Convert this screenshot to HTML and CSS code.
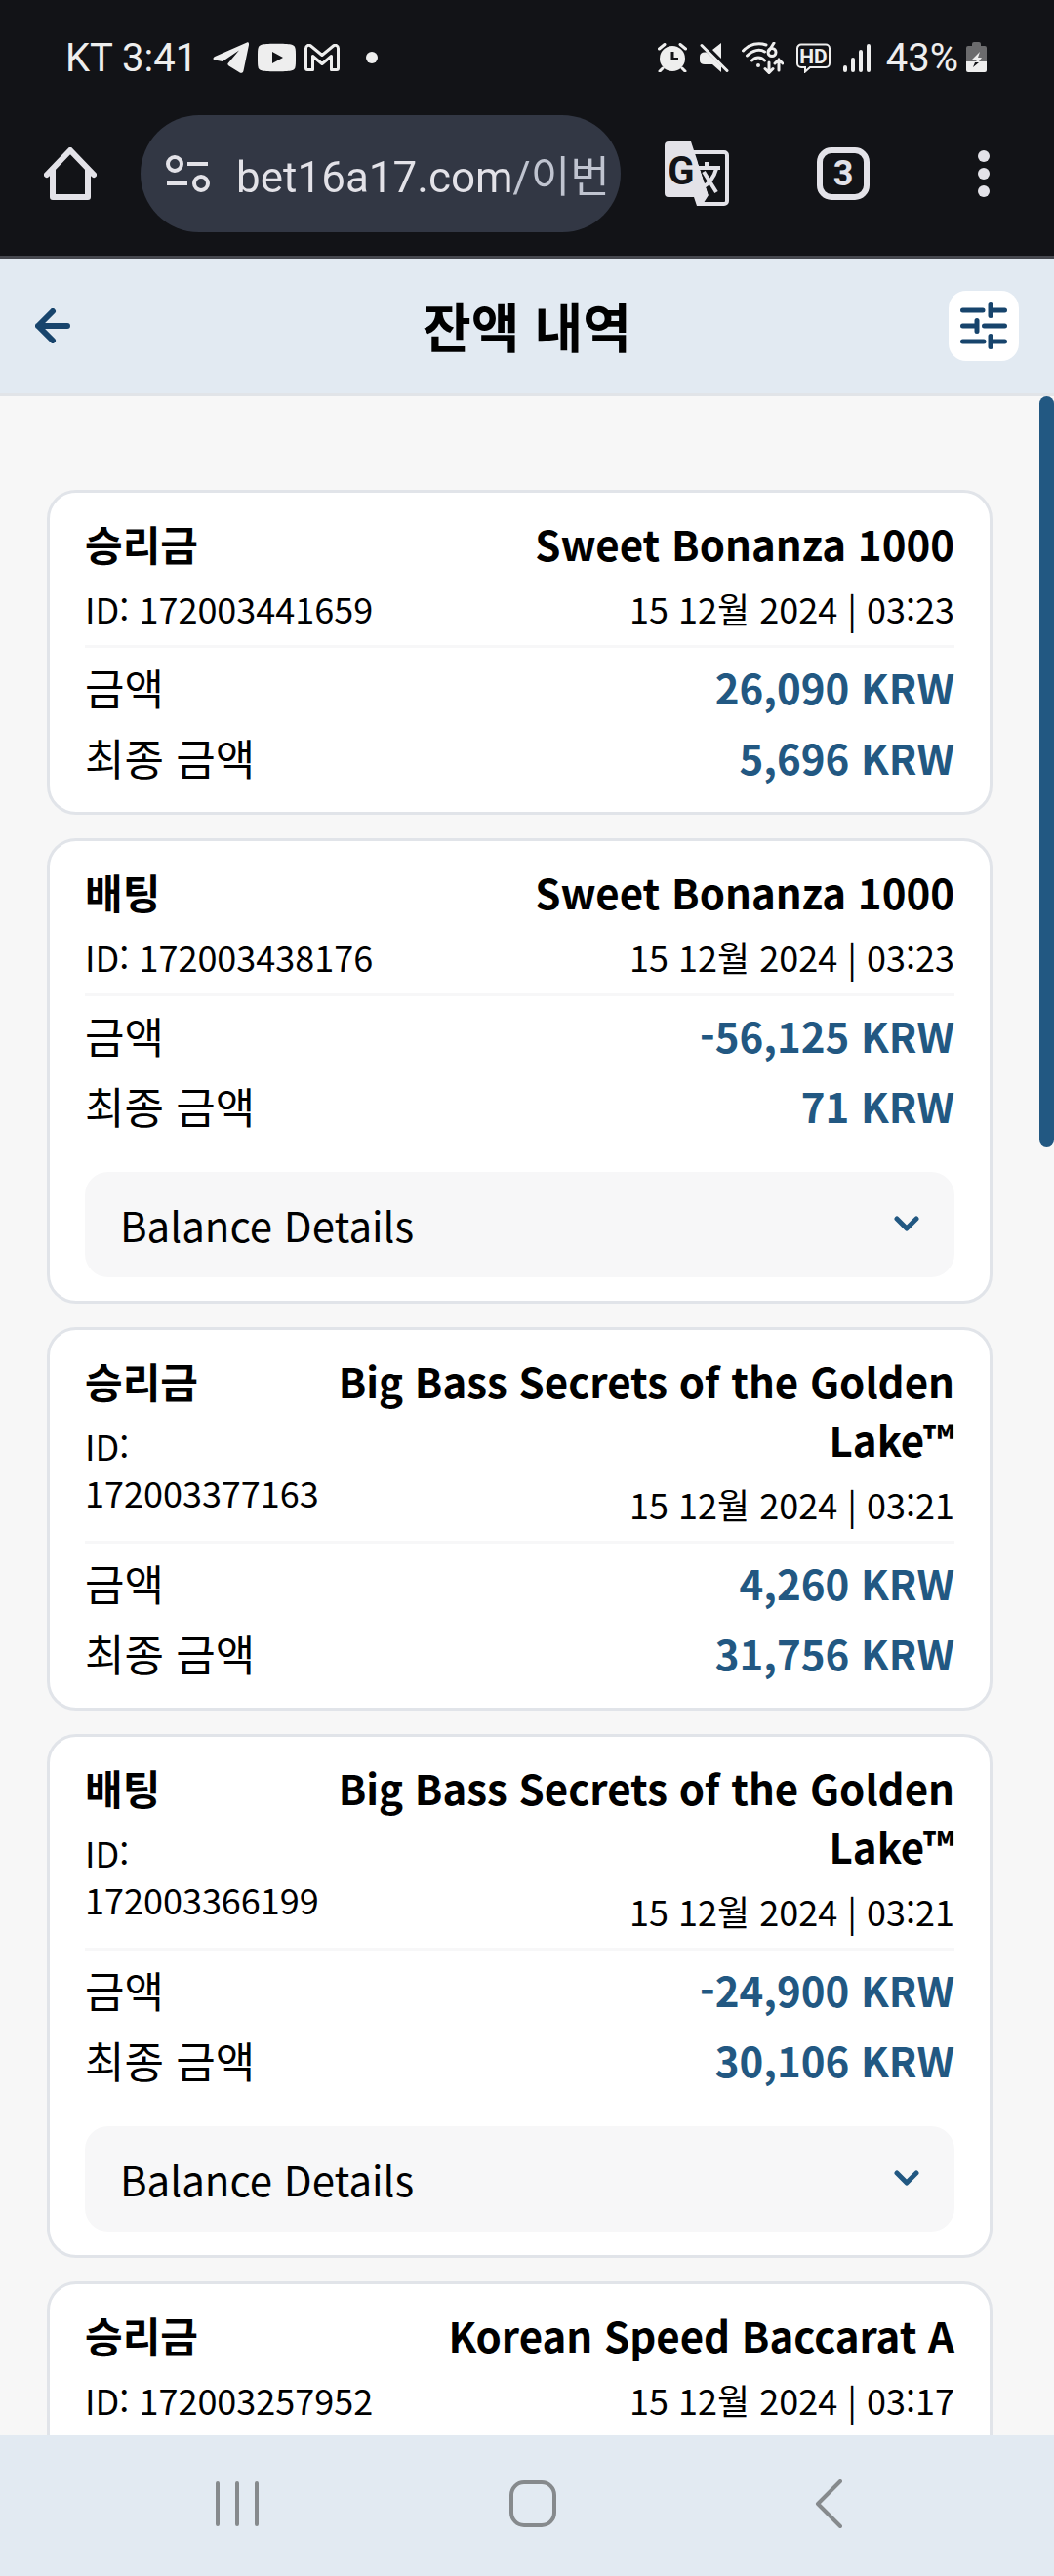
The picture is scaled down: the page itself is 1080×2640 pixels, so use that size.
FILE: index.html
```
<!DOCTYPE html>
<html lang="ko">

<head>
    <meta charset="UTF-8">
    <meta name="viewport" content="width=device-width, initial-scale=1.0">
    <title>잔액 내역</title>
    <link rel="stylesheet" href="styles.css">
</head>

<body>
    <!-- Phone status bar -->
    <div class="status-bar">
        <div class="status-group">
            <span class="status-text">KT 3:41</span>
            <span class="status-icons status-icons-left">
                <svg width="37" height="32" viewBox="0 0 37 32" fill="#eee">
                    <path d="M35 0.500L2 15c-2 1-2 3 0 3.500L10 20 27 8.500 16 21.500c-1 1-1 2 .5 3L27 31c2 1.500 4 1 4.500-1.500L37 3c.3-2-.7-3-2-2.500z" />
                </svg>
                <svg width="39" height="30" viewBox="0 0 39 30">
                    <path fill="#eee" d="M5 1.500C10 .5 29 .5 34 1.500S39 5 39 15s0 12.500-5 13.500-24 1-29 0S0 25 0 15 0 2.500 5 1.500z" />
                    <path fill="#121317" d="M15 9v12l11-6z" />
                </svg>
                <svg width="36" height="28" viewBox="0 0 36 28" fill="none" stroke="#eee" stroke-width="3" stroke-linejoin="round">
                    <path d="M1.500 4.500c0-3 3-4 5-2.500L18 11.500 29.500 2c2-1.500 5-.5 5 2.500V25c0 1-.5 1.500-1.500 1.500h-5.500v-14L18 20.500l-9.500-8v14H3c-1 0-1.500-.5-1.500-1.500z" />
                </svg>
            </span>
            <span class="status-dot"></span>
        </div>
        <div class="status-group">
            <span class="status-icons status-icons-right">
                <!-- alarm -->
                <svg width="30" height="30" viewBox="0 0 30 30">
                    <circle cx="15" cy="16" r="13" fill="#eee" />
                    <path d="M1.500 6L7 1.500M28.500 6L23 1.500M5 26l-3 3M25 26l3 3" stroke="#eee" stroke-width="3" stroke-linecap="round" />
                    <path d="M15 9v7.500h6" stroke="#121317" stroke-width="3" fill="none" />
                </svg>
                <!-- muted -->
                <svg width="30" height="30" viewBox="0 0 30 30">
                    <path fill="#eee" d="M22 0v16L13 7zM5 9.500h2L22 24v6l-9-8H5c-3 0-5-1.500-5-4v-4c0-3 2-4.500 5-4.500z" />
                    <path d="M2 2.500l26 26" stroke="#eee" stroke-width="3" stroke-linecap="round" />
                </svg>
                <!-- wifi -->
                <svg width="43" height="33" viewBox="0 0 43 33" fill="none" stroke="#eee" stroke-width="3" stroke-linecap="round">
                    <path d="M1.500 9C8 2 17 0 25 3M5.500 14c6-6 13-7 18-4M10.500 19c4-4 9-4 13 0" />
                    <circle cx="17" cy="24" r="2" fill="#eee" stroke="none" />
                    <path d="M33 1l-5 8" />
                    <circle cx="31" cy="10.500" r="4" />
                    <path d="M28 21v10M24 27.500l4 4 4-4M38 29V18M34 22l4-4 4 4" />
                </svg>
                <!-- HD voice -->
                <svg width="35" height="31" viewBox="0 0 35 31">
                    <path d="M5 1.500h25a4 4 0 0 1 4 4V21a4 4 0 0 1-4 4H14l-5 4.500V25H5a4 4 0 0 1-4-4V5.500a4 4 0 0 1 4-4z" fill="none" stroke="#eee" stroke-width="2" />
                    <text x="17.500" y="20.500" text-anchor="middle" class="hd-label">HD</text>
                </svg>
                <!-- signal -->
                <svg width="28" height="31" viewBox="0 0 28 31" stroke="#eee" stroke-width="4" stroke-linecap="round">
                    <path d="M2 25v3M10 17v11M18 9v19M26 3v25" />
                </svg>
            </span>
            <span class="status-text">43%</span>
            <!-- battery -->
            <svg class="battery" width="21" height="32" viewBox="0 0 21 32">
                <path fill="#6b6b6d" d="M6 2a2 2 0 0 1 2-2h5a2 2 0 0 1 2 2v2h4a2 2 0 0 1 2 2v14H0V6a2 2 0 0 1 2-2h4z" />
                <path fill="#eee" d="M0 20h21v9a2 2 0 0 1-2 2H2a2 2 0 0 1-2-2z" />
                <path fill="#eee" d="M14 10L5 19h6l-1 1h3l3-4h-4z" />
                <path fill="#121317" d="M7 26l6-5h-4z" />
            </svg>
        </div>
    </div>

    <!-- Browser toolbar -->
    <div class="toolbar">
        <button class="tool" aria-label="Home">
            <svg width="54" height="54" viewBox="0 0 54 54" fill="none" stroke="#e3e2e8" stroke-width="6" stroke-linecap="round" stroke-linejoin="round">
                <path d="M3 28L27 3l24 25" />
                <path d="M9 23v28h36V23" />
            </svg>
        </button>
        <div class="address">
            <button class="tool site-info" aria-label="Site settings">
                <svg width="45" height="39" viewBox="0 0 45 39" fill="none" stroke="#e3e2e8" stroke-width="4">
                    <circle cx="9" cy="9" r="7" />
                    <path d="M22 9h21M1 29h21" />
                    <circle cx="36" cy="29" r="7" />
                </svg>
            </button>
            <input class="url" type="text" value="bet16a17.com/이번" aria-label="Address">
        </div>
        <button class="tool" aria-label="Translate">
            <svg width="66" height="66" viewBox="0 0 66 66">
                <path d="M29 11h32a3 3 0 0 1 3 3v47a3 3 0 0 1-3 3H36" fill="none" stroke="#e3e2e8" stroke-width="4" />
                <path fill="#e3e2e8" d="M4 0h23l18 55-7 11h-5l-3-9H4a4 4 0 0 1-4-4V4a4 4 0 0 1 4-4z" />
                <path fill="#121317" d="M34 21l11 34 6-9-8-25z" />
                <path d="M34 27h23M43 21v6M53 28c-2 8-8 16-14 19M40 31l13 21" fill="none" stroke="#e3e2e8" stroke-width="4" />
                <text x="17" y="44" text-anchor="middle" class="g-label">G</text>
            </svg>
        </button>
        <button class="tool tabs" aria-label="3 open tabs">3</button>
        <button class="tool" aria-label="Menu">
            <svg width="54" height="54" viewBox="0 0 54 54" fill="#e3e2e8">
                <circle cx="27" cy="9" r="6" />
                <circle cx="27" cy="27" r="6" />
                <circle cx="27" cy="45" r="6" />
            </svg>
        </button>
    </div>

    <header class="page-header">
        <button class="back" aria-label="Back">
            <svg width="36" height="36" viewBox="0 0 36 36" fill="none" stroke="#17446c" stroke-width="6" stroke-linecap="round" stroke-linejoin="round">
                <path d="M33 18H3M18 3L3 18l15 15" />
            </svg>
        </button>
        <h1>잔액 내역</h1>
        <button class="filter" aria-label="Filter">
            <svg width="48" height="48" viewBox="0 0 48 48" fill="none" stroke="#17446c" stroke-width="5" stroke-linecap="round">
                <path d="M2.500 8H23M31 2.500v11M31 8h14.500" />
                <path d="M2.500 24H17M17 18.500v11M24.500 24h21" />
                <path d="M2.500 40H24M31 34.500v11M31 40h14.500" />
            </svg>
        </button>
    </header>

    <main class="content">
        <div class="list">
            <article class="card">
                <div class="card-head">
                    <div class="card-left">
                        <h2>승리금</h2>
                        <p>ID: 172003441659</p>
                    </div>
                    <div class="card-right">
                        <h3>Sweet Bonanza 1000</h3>
                        <p>15 12월 2024 | 03:23</p>
                    </div>
                </div>
                <dl class="amounts">
                    <div class="row">
                        <dt>금액</dt>
                        <dd>26,090 KRW</dd>
                    </div>
                    <div class="row">
                        <dt>최종 금액</dt>
                        <dd>5,696 KRW</dd>
                    </div>
                </dl>
            </article>

            <article class="card">
                <div class="card-head">
                    <div class="card-left">
                        <h2>배팅</h2>
                        <p>ID: 172003438176</p>
                    </div>
                    <div class="card-right">
                        <h3>Sweet Bonanza 1000</h3>
                        <p>15 12월 2024 | 03:23</p>
                    </div>
                </div>
                <dl class="amounts">
                    <div class="row">
                        <dt>금액</dt>
                        <dd>-56,125 KRW</dd>
                    </div>
                    <div class="row">
                        <dt>최종 금액</dt>
                        <dd>71 KRW</dd>
                    </div>
                </dl>
                <button class="details" aria-expanded="false">
                    Balance Details
                    <svg width="26" height="16" viewBox="0 0 26 16" fill="none" stroke="#225882" stroke-width="5" stroke-linecap="round" stroke-linejoin="round">
                        <path d="M3 3l10 10L23 3" />
                    </svg>
                </button>
            </article>

            <article class="card">
                <div class="card-head">
                    <div class="card-left">
                        <h2>승리금</h2>
                        <p>ID: 172003377163</p>
                    </div>
                    <div class="card-right">
                        <h3>Big Bass Secrets of the Golden Lake™</h3>
                        <p>15 12월 2024 | 03:21</p>
                    </div>
                </div>
                <dl class="amounts">
                    <div class="row">
                        <dt>금액</dt>
                        <dd>4,260 KRW</dd>
                    </div>
                    <div class="row">
                        <dt>최종 금액</dt>
                        <dd>31,756 KRW</dd>
                    </div>
                </dl>
            </article>

            <article class="card">
                <div class="card-head">
                    <div class="card-left">
                        <h2>배팅</h2>
                        <p>ID: 172003366199</p>
                    </div>
                    <div class="card-right">
                        <h3>Big Bass Secrets of the Golden Lake™</h3>
                        <p>15 12월 2024 | 03:21</p>
                    </div>
                </div>
                <dl class="amounts">
                    <div class="row">
                        <dt>금액</dt>
                        <dd>-24,900 KRW</dd>
                    </div>
                    <div class="row">
                        <dt>최종 금액</dt>
                        <dd>30,106 KRW</dd>
                    </div>
                </dl>
                <button class="details" aria-expanded="false">
                    Balance Details
                    <svg width="26" height="16" viewBox="0 0 26 16" fill="none" stroke="#225882" stroke-width="5" stroke-linecap="round" stroke-linejoin="round">
                        <path d="M3 3l10 10L23 3" />
                    </svg>
                </button>
            </article>

            <article class="card">
                <div class="card-head">
                    <div class="card-left">
                        <h2>승리금</h2>
                        <p>ID: 172003257952</p>
                    </div>
                    <div class="card-right">
                        <h3>Korean Speed Baccarat A</h3>
                        <p>15 12월 2024 | 03:17</p>
                    </div>
                </div>
            </article>
        </div>
        <div class="scroll-track">
            <div class="scroll-thumb" style="height: 36.8%"></div>
        </div>
    </main>

    <!-- System navigation -->
    <nav class="system-nav">
        <button aria-label="Recent apps">
            <svg width="44" height="48" viewBox="0 0 44 48" stroke="#868a8d" stroke-width="4" stroke-linecap="round">
                <path d="M2 3v42M22 3v42M42 3v42" />
            </svg>
        </button>
        <button aria-label="Home screen">
            <svg width="48" height="48" viewBox="0 0 48 48" fill="none" stroke="#868a8d" stroke-width="4">
                <rect x="2" y="2" width="44" height="44" rx="13" />
            </svg>
        </button>
        <button aria-label="Go back">
            <svg width="28" height="50" viewBox="0 0 28 50" fill="none" stroke="#868a8d" stroke-width="4" stroke-linecap="round" stroke-linejoin="round">
                <path d="M26 2L3 25l23 23" />
            </svg>
        </button>
    </nav>
</body>

</html>
```
FILE: styles.css
```
* {
    box-sizing: border-box;
}

body {
    margin: 0;
    height: 100vh;
    display: flex;
    flex-direction: column;
    overflow: hidden;
    background: #f7f7f7;
    color: #000;
    font-family: "Noto Sans CJK KR", "Noto Sans", sans-serif;
}

h1, h2, h3, p, dl, dd {
    margin: 0;
}

button {
    padding: 0;
    border: none;
    background: none;
    font: inherit;
    color: inherit;
    cursor: pointer;
}

svg {
    display: block;
    flex: none;
}

/* Status bar */
.status-bar {
    flex: none;
    height: 118px;
    padding: 0 69px 0 67px;
    display: flex;
    align-items: center;
    justify-content: space-between;
    background: #121317;
    color: #eee;
    font-family: Roboto, sans-serif;
    font-size: 40px;
}

.status-group,
.status-icons {
    display: flex;
    align-items: center;
}

.status-icons-left {
    gap: 9px;
    margin-left: 16px;
}

.status-icons-right {
    gap: 13px;
    margin-right: 16px;
}

.status-dot {
    width: 12px;
    height: 12px;
    margin-left: 27px;
    border-radius: 50%;
    background: #eee;
}

.battery {
    margin-left: 8px;
}

.hd-label {
    fill: #eee;
    font-size: 21px;
    font-weight: 700;
}

/* Browser toolbar */
.toolbar {
    flex: none;
    padding: 0 45px 24px;
    display: flex;
    align-items: center;
    gap: 90px;
    background: #121317;
    border-bottom: 3px solid #46484f;
    font-family: Roboto, "Noto Sans CJK KR", sans-serif;
}

.tool {
    flex: none;
}

.address {
    flex: 1;
    min-width: 0;
    height: 120px;
    margin: 0 -45px;
    padding: 0 6px 0 26px;
    display: flex;
    align-items: center;
    gap: 27px;
    border-radius: 60px;
    background: #323744;
}

.url {
    flex: 1;
    min-width: 0;
    height: 72px;
    padding: 0;
    border: none;
    outline: none;
    /* host is brighter than the path */
    background: linear-gradient(to right, #e3e2e8 285px, #c0c4d0 285px);
    background-clip: text;
    -webkit-background-clip: text;
    color: transparent;
    font: inherit;
    font-size: 44px;
}

.g-label {
    fill: #121317;
    font-size: 40px;
    font-weight: 700;
}

.tabs {
    width: 54px;
    height: 54px;
    border: 6px solid #e3e2e8;
    border-radius: 15px;
    color: #e3e2e8;
    font-size: 36px;
    font-weight: 700;
    line-height: 42px;
}

/* Page header */
.page-header {
    flex: none;
    height: 141px;
    padding: 0 36px;
    display: flex;
    align-items: center;
    justify-content: space-between;
    background: #e2eaf2;
    border-bottom: 3px solid #e1e4e8;
}

.page-header h1 {
    font-size: 54px;
    font-weight: 700;
    line-height: 72px;
}

.back,
.filter {
    width: 72px;
    height: 72px;
    display: flex;
    align-items: center;
}

.filter {
    justify-content: center;
    border-radius: 18px;
    background: #fff;
}

/* List */
.content {
    flex: 1;
    min-height: 0;
    display: flex;
}

.list {
    flex: 1;
    min-width: 0;
    padding: 96px 48px 0;
    display: flex;
    flex-direction: column;
    gap: 24px;
    overflow: hidden;
}

.scroll-track {
    flex: none;
    width: 15px;
}

.scroll-thumb {
    border-radius: 8px;
    background: #225882;
}

.card {
    flex: none;
    padding: 22px 36px 24px;
    border: 3px solid #e1e4e9;
    border-radius: 30px;
    background: #fff;
}

.card-head {
    display: flex;
    justify-content: space-between;
    padding-bottom: 14px;
    border-bottom: 3px solid #f7f7f8;
}

.card-left,
.card-right {
    display: flex;
    flex-direction: column;
    gap: 12px;
}

.card-right {
    flex: none;
    max-width: 73%;
    text-align: right;
}

.card h2,
.card h3 {
    font-size: 42px;
    font-weight: 700;
    line-height: 60px;
}

.card p {
    font-size: 36px;
    line-height: 48px;
}

.amounts {
    padding: 10px 0 2px;
    display: flex;
    flex-direction: column;
    gap: 12px;
}

.row {
    display: flex;
    justify-content: space-between;
    line-height: 60px;
}

.row dt {
    font-size: 44px;
}

.row dd {
    color: #225882;
    font-size: 42px;
    font-weight: 700;
}

.details {
    width: 100%;
    height: 108px;
    margin-top: 36px;
    padding: 0 36px 2px;
    display: flex;
    align-items: center;
    justify-content: space-between;
    border-radius: 24px;
    background: #f7f7f8;
    font-size: 42px;
}

/* System navigation */
.system-nav {
    flex: none;
    height: 144px;
    padding: 0 80px 4px 92px;
    display: grid;
    grid-template-columns: repeat(3, 1fr);
    background: #e2eaf2;
}

.system-nav button {
    display: flex;
    align-items: center;
    justify-content: center;
}
```
